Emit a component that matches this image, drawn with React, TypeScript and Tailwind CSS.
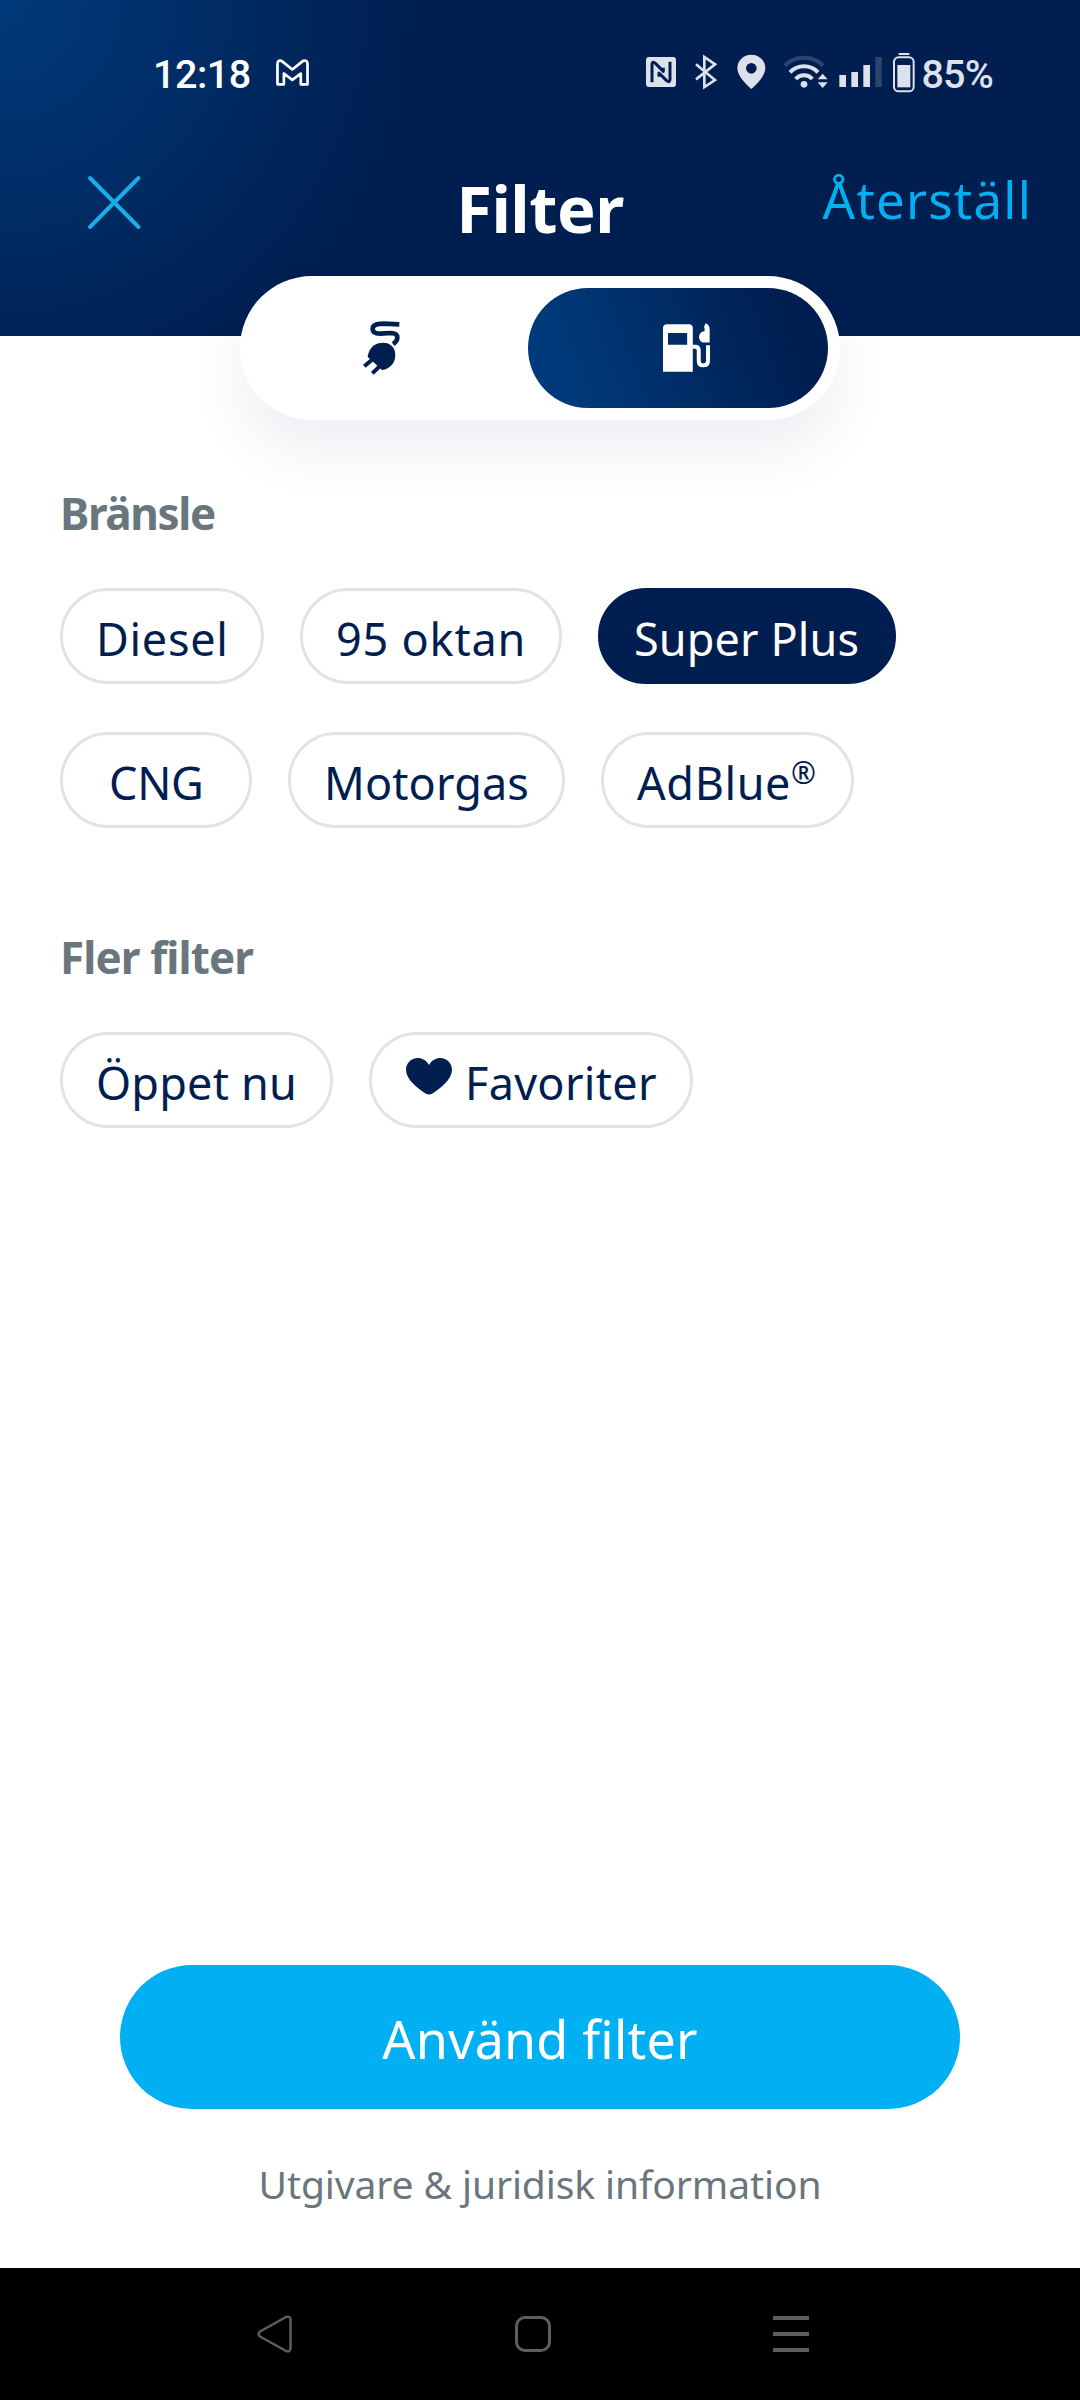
import React, { useState } from "react";
import clsx from "clsx";

const GmailIcon = () => (
  <svg viewBox="18 26 97 80" className="w-[33px] h-[27px]" fill="none" stroke="white" strokeWidth="8" strokeLinejoin="round">
    <path d="M22 101V40C22 31 30 28 36 33L66 57L96 33C102 28 111 31 111 40V101H91V69L66 88L41 69V101Z" />
  </svg>
);

const StatusIcons = () => (
  <div className="flex items-center h-[41px] text-[#dce1ec]">
    {/* nfc */}
    <svg viewBox="78 66 90 123" className="w-[30px] h-[41px]">
      <rect x="78" y="81" width="90" height="90" rx="9" fill="currentColor" />
      <path
        d="M96 157V103Q97 92 107 101L130 124V113M150 95V149Q149 160 139 151L117 129V140"
        fill="none"
        stroke="#001e50"
        strokeWidth="9"
        strokeLinejoin="round"
      />
    </svg>
    {/* bluetooth */}
    <svg viewBox="224 66 66 123" className="w-[22px] h-[41px] ml-[19px]" fill="none" stroke="currentColor" strokeWidth="8">
      <path d="M227 103L284 150L252 171V81L284 103L227 148" />
    </svg>
    {/* location */}
    <svg viewBox="350 66 87 123" className="w-[29px] h-[41px] ml-[20px]">
      <path
        d="M393 74C369 74 351 92 351 115C351 143 393 177 393 177C393 177 435 143 435 115C435 92 417 74 393 74ZM393 99A16 16 0 1 1 393 131A16 16 0 1 1 393 99Z"
        fill="currentColor"
        fillRule="evenodd"
      />
    </svg>
    {/* wifi */}
    <svg viewBox="487 66 135 123" className="w-[45px] h-[41px] ml-[17px]" fill="none" stroke="currentColor" strokeWidth="12">
      <path d="M493 106A82 82 0 0 1 607 106" opacity="0.2" />
      <path d="M508 127A58 58 0 0 1 592 127" />
      <path d="M525 147A34 34 0 0 1 575 147" />
      <circle cx="550" cy="163" r="10" fill="currentColor" stroke="none" />
      <path d="M606 131L621 148H591ZM606 174L621 157H591Z" fill="currentColor" stroke="none" />
    </svg>
    {/* signal */}
    <svg viewBox="654 66 129 123" className="w-[43px] h-[41px] ml-[11px]" fill="currentColor">
      <rect x="655" y="135" width="20" height="36" />
      <rect x="691" y="126" width="20" height="45" />
      <rect x="727" y="105" width="20" height="66" />
      <rect x="763" y="81" width="19" height="90" opacity="0.2" />
    </svg>
    {/* battery */}
    <svg viewBox="815 66 66 123" className="w-[22px] h-[41px] ml-[11px]">
      <rect x="832" y="69" width="32" height="6" fill="currentColor" />
      <rect x="818" y="82" width="59" height="102" rx="14" fill="none" stroke="currentColor" strokeWidth="6" />
      <rect x="828" y="105" width="39" height="67" fill="currentColor" />
    </svg>
    <span className="ml-[6px] font-['Roboto',sans-serif] font-medium text-[39.5px] leading-none tracking-[-0.8px] pt-[5px]">85%</span>
  </div>
);

const PlugIcon = () => (
  <svg viewBox="60 54 129 177" className="w-[43px] h-[59px]" fill="none" stroke="#001e50">
    <path
      d="M178 73L130 71C106 71 98 77 98 87C98 97 107 101 120 101L152 99C167 99 172 105 172 113C172 121 167 127 159 132"
      strokeWidth="14"
    />
    <path
      d="M87 169C92 145 108 132 130 132C149 132 162 146 162 164C162 186 149 202 128 206Z"
      fill="#001e50"
      strokeWidth="8"
      strokeLinejoin="round"
    />
    <path d="M96 179L73 199M120 198L97 220" strokeWidth="12" />
  </svg>
);

const PumpIcon = () => (
  <svg viewBox="69 69 142 148" className="w-[47px] h-[49px]" fill="white">
    <path d="M69 216V85Q69 73 82 73H147Q159 73 159 85V216ZM84 99V135H142V99Z" fillRule="evenodd" />
    <path d="M158 141H167Q177 141 177 152V182C177 192 182 197 190 197C199 197 205 192 205 182V136" fill="none" stroke="white" strokeWidth="12" />
    <path d="M198 70C206 74 210 80 210 88V128H194C184 128 178 120 178 111C178 101 184 95 194 94C196 88 194 83 193 80Z" />
  </svg>
);

const HeartIcon = () => (
  <svg viewBox="0 0 46 37" className="w-[46px] h-[37px] ml-[1px] mr-[13px] mb-[13px] shrink-0" fill="#001e50">
    <path d="M23 7C26 2 30 0 34 0C41 0 46 5 46 12C46 21 35 30 26.500 35.500C24.500 36.800 21.500 36.800 19.500 35.500C11 30 0 21 0 12C0 5 5 0 12 0C16 0 20 2 23 7Z" />
  </svg>
);

interface ChipProps {
  id: string;
  className: string;
  active: boolean;
  onToggle: (id: string) => void;
  children: React.ReactNode;
}

const Chip: React.FC<ChipProps> = ({ id, className, active, onToggle, children }) => (
  <button
    type="button"
    onClick={() => onToggle(id)}
    className={clsx(
      "flex items-center h-24 pt-[5px] rounded-full border-[3px] text-[45px] whitespace-nowrap",
      active ? "bg-[#001e50] border-[#001e50] text-white" : "bg-white border-[#dfe4e8] text-[#001e50]",
      className
    )}
  >
    {children}
  </button>
);

const fuels = [
  { id: "diesel", label: "Diesel", className: "w-[204px] pl-[33px] tracking-[0.7px]" },
  { id: "oktan95", label: "95 oktan", className: "w-[262px] pl-[33px] tracking-[0.8px]" },
  { id: "superplus", label: "Super Plus", className: "w-[298px] pl-[33px] tracking-[0.1px]" },
  { id: "cng", label: "CNG", className: "w-[192px] pl-[46px] tracking-[-0.3px]" },
  { id: "motorgas", label: "Motorgas", className: "w-[277px] pl-[33px] tracking-[0.1px]" },
  { id: "adblue", label: "AdBlue", mark: "®", className: "w-[253px] pl-[33px] tracking-[0.6px]" },
];

export default function App() {
  const [selected, setSelected] = useState<string[]>(["superplus"]);

  const toggle = (id: string) =>
    setSelected((prev) => (prev.includes(id) ? prev.filter((s) => s !== id) : [...prev, id]));

  return (
    <div className="flex flex-col w-[1080px] h-[2400px] bg-white font-['Noto_Sans',sans-serif]">
      <header className="h-[336px] shrink-0 bg-[radial-gradient(circle_420px_at_0_0,#003a7a,#001e50)]">
        <div className="flex items-center justify-between h-[145px] pl-[153px] pr-[87px]">
          <div className="flex items-center gap-[25px]">
            <span className="font-['Roboto',sans-serif] font-medium text-[39.5px] leading-none tracking-[-0.5px] text-white pt-[5px]">12:18</span>
            <GmailIcon />
          </div>
          <StatusIcons />
        </div>
        <div className="grid grid-cols-[1fr_auto_1fr] items-center h-[114px] pl-[86px] pr-[48px]">
          <button type="button" onClick={() => setSelected([])} className="w-[57px]">
            <svg viewBox="0 0 57 57" className="w-[57px] h-[57px]" stroke="#16aeea" strokeWidth="4" strokeLinecap="round">
              <path d="M4 4L52.500 53M52.500 4L4 53" />
            </svg>
          </button>
          <h1 className="text-[65px] leading-[80px] font-bold tracking-[-0.5px] text-white pt-[12px] -ml-[38px]">Filter</h1>
          <button
            type="button"
            onClick={() => setSelected([])}
            className="justify-self-end text-[51px] leading-[70px] tracking-[1.2px] text-[#00b0f0] pb-[7px]"
          >
            Återställ
          </button>
        </div>
      </header>

      <div className="flex shrink-0 w-[600px] h-36 mx-auto -mt-[60px] py-3 pr-3 rounded-full bg-white shadow-[0_30px_60px_rgba(0,30,80,0.07)]">
        <button type="button" className="flex items-center justify-center w-[288px] pr-[5px] pb-[2px]">
          <PlugIcon />
        </button>
        <button
          type="button"
          className="flex items-center justify-center w-[300px] pl-[17px] pb-[1px] rounded-full bg-[linear-gradient(70deg,#003a7a_15%,#001e50_85%)]"
        >
          <PumpIcon />
        </button>
      </div>

      <main className="flex flex-col flex-1 px-[60px]">
        <h2 className="mt-[64px] text-[44px] leading-[59px] font-bold tracking-[-1.35px] text-[#6a767d]">Bränsle</h2>
        <div className="flex flex-wrap mt-[45px] gap-x-9 gap-y-12">
          {fuels.map((f) => (
            <Chip key={f.id} id={f.id} className={f.className} active={selected.includes(f.id)} onToggle={toggle}>
              {f.label}
              {f.mark && <span className="text-[30px] mb-[20px]">{f.mark}</span>}
            </Chip>
          ))}
        </div>

        <h2 className="mt-[100px] text-[44px] leading-[59px] font-bold tracking-[-0.9px] text-[#6a767d]">Fler filter</h2>
        <div className="flex mt-[45px] gap-9">
          <Chip id="open" className="w-[273px] pl-[33px] tracking-[0.2px]" active={selected.includes("open")} onToggle={toggle}>
            Öppet nu
          </Chip>
          <Chip id="favorites" className="w-[324px] pl-[33px] tracking-[0.3px]" active={selected.includes("favorites")} onToggle={toggle}>
            <HeartIcon />
            Favoriter
          </Chip>
        </div>

        <button
          type="button"
          className="w-[840px] h-36 mt-auto mx-auto pt-[4px] rounded-full bg-[#00b0f2] text-[52px] tracking-[0.2px] text-white"
        >
          Använd filter
        </button>
        <a href="#" className="mt-[45px] mb-[55px] text-center text-[39px] leading-[59px] tracking-[-0.1px] text-[#6a767d]">
          Utgivare &amp; juridisk information
        </a>
      </main>

      <nav className="flex items-center h-[132px] shrink-0 pl-[256px] bg-black">
        <svg viewBox="0 0 38 38" className="w-[38px] h-[38px]" fill="none" stroke="#5e5e5e" strokeWidth="2.500" strokeLinejoin="round">
          <path d="M4 16.500L30 2Q34.500 0.500 34.500 5V33Q34.500 37.500 30 36L4 21.500Q1 19 4 16.500Z" />
        </svg>
        <span className="w-9 h-9 ml-[221px] rounded-[10px] border-[3px] border-[#5e5e5e]" />
        <div className="flex flex-col justify-between w-9 h-9 ml-[222px]">
          <span className="h-[4px] bg-[#5e5e5e]" />
          <span className="h-[4px] bg-[#5e5e5e]" />
          <span className="h-[4px] bg-[#5e5e5e]" />
        </div>
      </nav>
    </div>
  );
}
